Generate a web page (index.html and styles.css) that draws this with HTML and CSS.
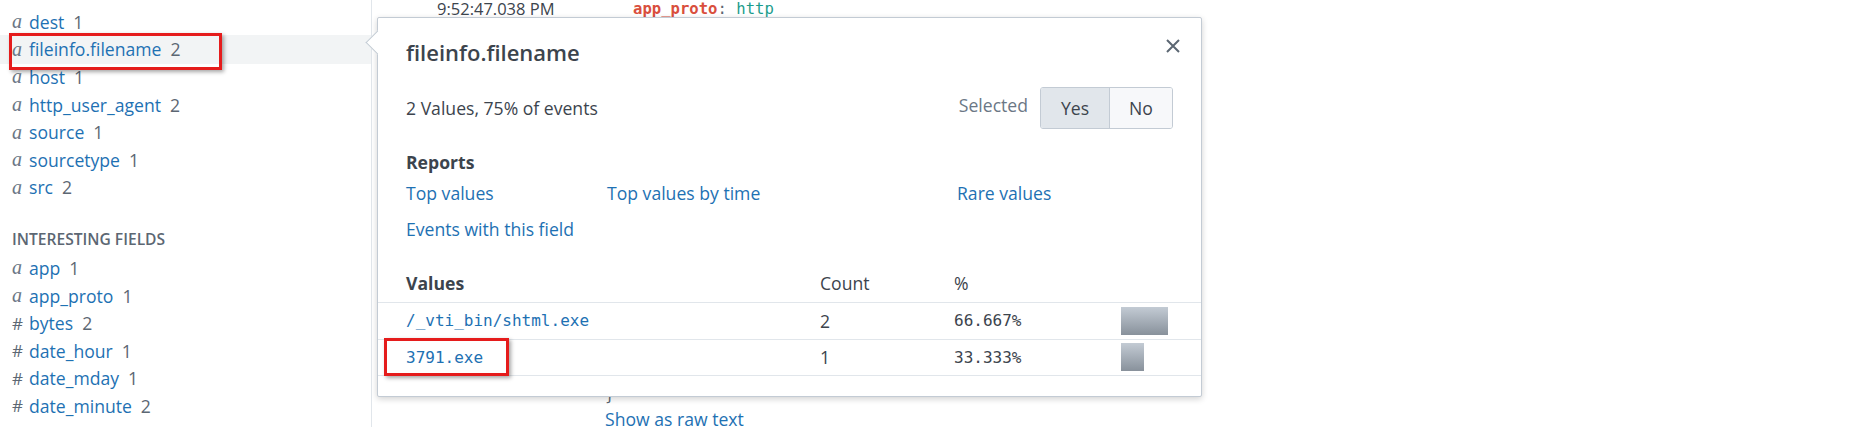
FILE: index.html
```html
<!DOCTYPE html>
<html lang="en">
<head>
<meta charset="utf-8">
<title>Fields</title>
<link rel="stylesheet" href="styles.css">
</head>
<body>
<div class="page">
  <aside class="sidebar">
    <ul class="fields">
      <li class="field"><span class="type type-str">a</span><span class="name">dest</span><span class="count">1</span></li>
      <li class="field is-active"><span class="type type-str">a</span><span class="name">fileinfo.filename</span><span class="count">2</span></li>
      <li class="field"><span class="type type-str">a</span><span class="name">host</span><span class="count">1</span></li>
      <li class="field"><span class="type type-str">a</span><span class="name">http_user_agent</span><span class="count">2</span></li>
      <li class="field"><span class="type type-str">a</span><span class="name">source</span><span class="count">1</span></li>
      <li class="field"><span class="type type-str">a</span><span class="name">sourcetype</span><span class="count">1</span></li>
      <li class="field"><span class="type type-str">a</span><span class="name">src</span><span class="count">2</span></li>
    </ul>
    <div class="section-title">INTERESTING FIELDS</div>
    <ul class="fields fields-interesting">
      <li class="field"><span class="type type-str">a</span><span class="name">app</span><span class="count">1</span></li>
      <li class="field"><span class="type type-str">a</span><span class="name">app_proto</span><span class="count">1</span></li>
      <li class="field"><span class="type type-num">#</span><span class="name">bytes</span><span class="count">2</span></li>
      <li class="field"><span class="type type-num">#</span><span class="name">date_hour</span><span class="count">1</span></li>
      <li class="field"><span class="type type-num">#</span><span class="name">date_mday</span><span class="count">1</span></li>
      <li class="field"><span class="type type-num">#</span><span class="name">date_minute</span><span class="count">2</span></li>
    </ul>
  </aside>

  <main class="main">
    <div class="event">
      <div class="time">9:52:47.038 PM</div>
      <div class="event-body">
        <div class="json">
          <div class="jline indent"><span class="key">app_proto</span><span class="punc">: </span><span class="str">http</span></div>
          <div class="jline jclose"><span class="punc">}</span></div>
        </div>
        <a class="raw-link" href="#">Show as raw text</a>
      </div>
    </div>

    <div class="popover">
      <div class="pop-header">
        <h2 class="pop-title">fileinfo.filename</h2>
        <button class="close" aria-label="Close">
          <svg width="14" height="14" viewBox="0 0 14 14"><path d="M1 1 L13 13 M13 1 L1 13" stroke="#5c6773" stroke-width="2" fill="none"/></svg>
        </button>
      </div>
      <div class="pop-info">
        <span class="summary">2 Values, 75% of events</span>
        <div class="selected">
          <span class="selected-label">Selected</span>
          <div class="btn-group">
            <button class="btn is-on">Yes</button>
            <button class="btn">No</button>
          </div>
        </div>
      </div>
      <div class="reports">
        <div class="reports-title">Reports</div>
        <div class="report-links">
          <a href="#">Top values</a>
          <a href="#">Top values by time</a>
          <a href="#">Rare values</a>
          <a href="#">Events with this field</a>
        </div>
      </div>
      <div class="values">
        <div class="vrow vhead">
          <span class="vh-values">Values</span>
          <span>Count</span>
          <span>%</span>
          <span></span>
        </div>
        <div class="vrow">
          <a class="val" href="#">/_vti_bin/shtml.exe</a>
          <span class="cnt">2</span>
          <span class="pct">66.667%</span>
          <span class="bar-cell"><span class="bar" style="width:47px"></span></span>
        </div>
        <div class="vrow">
          <a class="val" href="#">3791.exe</a>
          <span class="cnt">1</span>
          <span class="pct">33.333%</span>
          <span class="bar-cell"><span class="bar" style="width:23px"></span></span>
        </div>
      </div>
    </div>
  </main>

  <div class="annot annot-field"></div>
  <div class="annot annot-value"></div>
</div>
</body>
</html>
```

FILE: styles.css
```css
* { box-sizing: border-box; }

html, body {
  margin: 0;
  padding: 0;
  background: #ffffff;
}

body {
  font-family: "Open Sans", "Liberation Sans", sans-serif;
  font-size: 17.6px;
  color: #3c444d;
  overflow: hidden;
}

a { color: #1e71b3; text-decoration: none; }

.page {
  position: relative;
  display: flex;
  width: 1868px;
  height: 427px;
  overflow: hidden;
}

/* ---------- sidebar ---------- */
.sidebar {
  width: 372px;
  flex: none;
  border-right: 1px solid #e1e6eb;
  padding-top: 8px;
}

.fields {
  list-style: none;
  margin: 0;
  padding: 0;
}

.field {
  display: flex;
  align-items: center;
  height: 27.6px;
  padding-left: 12px;
  white-space: nowrap;
}

.field.is-active {
  background: #f2f4f5;
  box-shadow: 0 -1px 0 #f2f4f5, 0 1px 0 #f2f4f5;
}

.type {
  width: 17px;
  flex: none;
  color: #6b7785;
}

.type-str {
  font-family: "Liberation Serif", "DejaVu Serif", serif;
  font-style: italic;
  font-size: 20px;
}

.type-num {
  font-size: 17px;
  color: #5c6773;
}

.name { color: #1e71b3; }

.count {
  margin-left: 9px;
  color: #5c6773;
}

.section-title {
  margin-top: 26px;
  height: 24px;
  line-height: 24px;
  padding-left: 12px;
  font-size: 15.6px;
  font-weight: 600;
  color: #5c6773;
}

.fields-interesting { margin-top: 3px; }

/* ---------- main / event ---------- */
.main {
  position: relative;
  flex: 1;
}

.event {
  display: flex;
  padding-left: 65px;
}

.time {
  width: 168px;
  flex: none;
  line-height: 18px;
  font-size: 16.5px;
  color: #3c444d;
}

.event-body {
  display: flex;
  flex-direction: column;
}

.jline {
  height: 18px;
  line-height: 18px;
  font-family: "DejaVu Sans Mono", "Liberation Mono", monospace;
  font-size: 15.6px;
  color: #3c444d;
  white-space: pre;
}

.jline.indent { padding-left: 28px; }

.jline.jclose {
  margin-top: 367px;
  height: 20px;
  line-height: 20px;
}

.key { color: #d94f3d; font-weight: bold; }
.punc { color: #5c6773; }
.str { color: #1a9c8c; }

.raw-link {
  display: block;
  margin-top: 2px;
  line-height: 24px;
  font-size: 17.6px;
}

/* ---------- popover ---------- */
.popover {
  position: absolute;
  left: 5px;
  top: 17px;
  width: 825px;
  background: #ffffff;
  border: 1px solid #c3cbd4;
  border-radius: 2px;
  box-shadow: 0 2px 6px rgba(0, 0, 0, 0.18);
  padding-bottom: 20px;
  z-index: 2;
}

.popover::before {
  content: "";
  position: absolute;
  left: -9px;
  top: 16px;
  width: 16px;
  height: 16px;
  background: #ffffff;
  border-left: 1px solid #c3cbd4;
  border-bottom: 1px solid #c3cbd4;
  transform: rotate(45deg);
}

.pop-header {
  display: flex;
  justify-content: space-between;
  align-items: flex-start;
  padding: 19px 21px 0 28px;
}

.pop-title {
  margin: 0;
  font-size: 22px;
  line-height: 30px;
  font-weight: 600;
  color: #3c444d;
}

.close {
  margin-top: 2px;
  padding: 0;
  border: 0;
  background: none;
  width: 14px;
  height: 14px;
  display: flex;
}

.pop-info {
  display: flex;
  justify-content: space-between;
  align-items: center;
  margin-top: 20px;
  padding: 0 28px;
  height: 42px;
}

.summary { color: #3c444d; }

.selected {
  display: flex;
  align-items: center;
  gap: 12px;
}

.selected-label {
  color: #6b7785;
  margin-bottom: 6px;
}

.btn-group {
  display: flex;
  height: 42px;
  border: 1px solid #c3cbd4;
  border-radius: 3px;
  overflow: hidden;
}

.btn {
  font-family: inherit;
  font-size: 17.6px;
  color: #3c444d;
  border: 0;
  padding: 0;
  background: #f7f8fa;
}

.btn:first-child {
  width: 69px;
  border-right: 1px solid #c3cbd4;
}

.btn:last-child { width: 62px; }

.btn.is-on { background: #e1e6eb; }

.reports {
  margin-top: 21px;
  padding: 0 28px;
}

.reports-title {
  line-height: 24px;
  font-weight: 700;
  color: #3c444d;
}

.report-links {
  margin-top: 7px;
  display: grid;
  grid-template-columns: 201px 350px 1fr;
  row-gap: 12px;
  line-height: 24px;
}

.values { margin-top: 23px; }

.vrow {
  display: grid;
  grid-template-columns: 414px 134px 167px 1fr;
  align-items: center;
  height: 36.5px;
  padding-left: 28px;
  border-bottom: 1px solid #e1e6eb;
}

.vrow.vhead { height: 39px; }

.vh-values { font-weight: 700; }

.val, .pct {
  font-family: "DejaVu Sans Mono", "Liberation Mono", monospace;
  font-size: 16px;
}

.pct { color: #3c444d; }
.cnt { color: #3c444d; }

.bar-cell { display: flex; }

.bar {
  display: block;
  height: 28px;
  background: linear-gradient(to bottom, #c3cbd4, #88919b);
}

/* ---------- annotations ---------- */
.annot {
  position: absolute;
  border: 3px solid #e51c1c;
  box-shadow: 2px 2px 4px rgba(0, 0, 0, 0.35);
  z-index: 5;
}

.annot-field {
  left: 9px;
  top: 33px;
  width: 213px;
  height: 37px;
}

.annot-value {
  left: 384px;
  top: 338px;
  width: 125px;
  height: 38px;
}
```
